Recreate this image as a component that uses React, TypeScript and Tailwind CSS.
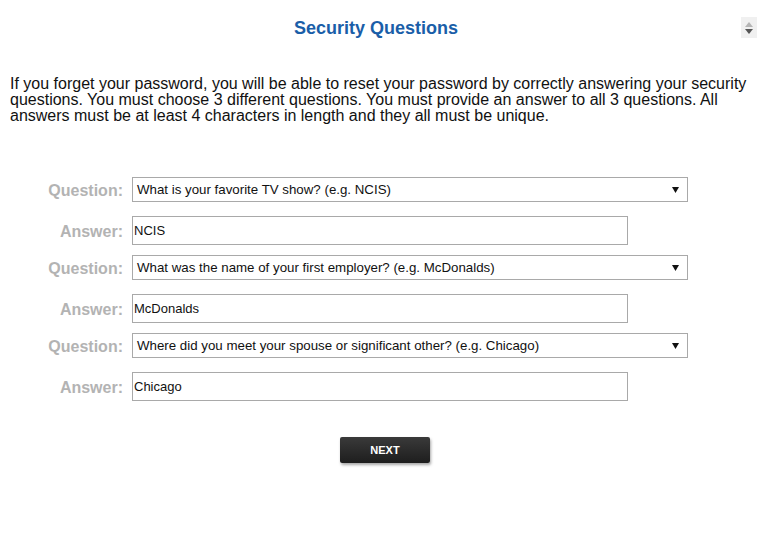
import React from "react";

const rows = [
  { q: "What is your favorite TV show? (e.g. NCIS)", a: "NCIS" },
  { q: "What was the name of your first employer? (e.g. McDonalds)", a: "McDonalds" },
  { q: "Where did you meet your spouse or significant other? (e.g. Chicago)", a: "Chicago" },
];

function Arrow() {
  return (
    <svg width="7" height="6" viewBox="0 0 7 6" className="block">
      <polygon points="0,0 7,0 3.5,6" fill="#111" />
    </svg>
  );
}

export default function App() {
  return (
    <div
      className="relative w-[776px] h-[552px] bg-white overflow-hidden"
      style={{ fontFamily: '"Liberation Sans", Arial, sans-serif' }}
    >
      <div className="w-[752px] pt-[17px] text-center">
        <h1 className="text-[18px] leading-[22px] font-bold text-[#1a5ea8]">Security Questions</h1>
      </div>
      <div className="absolute left-[741px] top-[17px] w-[16px] h-[21px] bg-[#f0f0f0] flex flex-col items-center justify-center gap-[2px]">
        <svg width="8" height="5" viewBox="0 0 8 5"><polygon points="0,5 8,5 4,0" fill="#b5b5b5" /></svg>
        <svg width="8" height="5" viewBox="0 0 8 5"><polygon points="0,0 8,0 4,5" fill="#555" /></svg>
      </div>

      <p className="mt-[37px] ml-[10px] w-[750px] text-[16px] leading-[16px] text-[#111]">
        If you forget your password, you will be able to reset your password by correctly answering your security
        questions. You must choose 3 different questions. You must provide an answer to all 3 questions. All
        answers must be at least 4 characters in length and they all must be unique.
      </p>

      <div className="mt-[53px] flex flex-col">
        {rows.map((r, i) => (
          <div key={i} className="flex flex-col">
            <div className={`flex items-center h-[25px] ${i > 0 ? "mt-[10px]" : ""}`}>
              <div className="w-[123px] pt-[3px] text-right text-[16px] font-bold text-[#b3b3b3]">Question:</div>
              <div className="ml-[9px] w-[556px] h-[25px] border border-[#a9a9a9] bg-white flex items-center pl-[4px] pr-[8px]">
                <span className="flex-1 text-[13.3px] text-[#111] whitespace-nowrap">{r.q}</span>
                <Arrow />
              </div>
            </div>
            <div className="flex items-center h-[29px] mt-[14px]">
              <div className="w-[123px] pt-[2px] text-right text-[16px] font-bold text-[#b3b3b3]">Answer:</div>
              <div className="ml-[9px] w-[496px] h-[29px] border border-[#a9a9a9] bg-white flex items-center pl-[1px]">
                <span className="text-[13px] text-[#111]">{r.a}</span>
              </div>
            </div>
          </div>
        ))}
      </div>

      <div className="mt-[36px] ml-[340px]">
        <button className="w-[90px] h-[26px] rounded-[2px] bg-gradient-to-b from-[#3a3a3a] to-[#1e1e1e] text-white text-[11px] font-bold shadow-[1px_2px_3px_rgba(0,0,0,0.35)]">
          NEXT
        </button>
      </div>
    </div>
  );
}
